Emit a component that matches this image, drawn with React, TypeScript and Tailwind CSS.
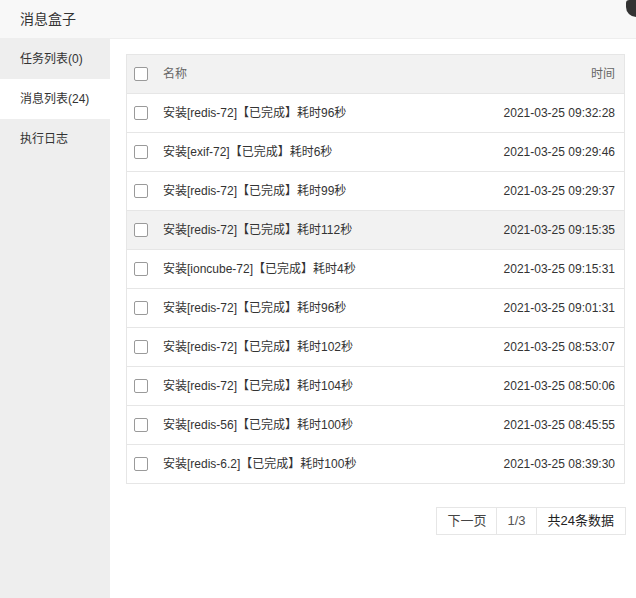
import React from 'react';

type Msg = { name: string; time: string };

const messages: Msg[] = [
  { name: '安装[redis-72]【已完成】耗时96秒', time: '2021-03-25 09:32:28' },
  { name: '安装[exif-72]【已完成】耗时6秒', time: '2021-03-25 09:29:46' },
  { name: '安装[redis-72]【已完成】耗时99秒', time: '2021-03-25 09:29:37' },
  { name: '安装[redis-72]【已完成】耗时112秒', time: '2021-03-25 09:15:35' },
  { name: '安装[ioncube-72]【已完成】耗时4秒', time: '2021-03-25 09:15:31' },
  { name: '安装[redis-72]【已完成】耗时96秒', time: '2021-03-25 09:01:31' },
  { name: '安装[redis-72]【已完成】耗时102秒', time: '2021-03-25 08:53:07' },
  { name: '安装[redis-72]【已完成】耗时104秒', time: '2021-03-25 08:50:06' },
  { name: '安装[redis-56]【已完成】耗时100秒', time: '2021-03-25 08:45:55' },
  { name: '安装[redis-6.2]【已完成】耗时100秒', time: '2021-03-25 08:39:30' },
];

const tabs = ['任务列表(0)', '消息列表(24)', '执行日志'];

const Checkbox: React.FC = () => (
  <span className="inline-block w-[14px] h-[14px] shrink-0 rounded-[2px] border border-[#9a9a9a] bg-white" />
);

const App: React.FC = () => {
  const active = 1;
  const hovered = 3;

  return (
    <div
      className="relative w-[636px] h-[598px] bg-white"
      style={{ fontFamily: '"Liberation Sans", "Noto Sans CJK SC", sans-serif' }}
    >
      <div className="flex flex-col h-full">
        <div className="h-[39px] shrink-0 flex items-center pl-5 bg-[#f8f8f8] border-b border-[#eeeeee] text-[14px] text-[#333]">
          消息盒子
        </div>

        <div className="flex flex-1 min-h-0">
          <div className="w-[110px] shrink-0 bg-[#eeeeee] flex flex-col">
            {tabs.map((t, i) => (
              <div
                key={t}
                className={
                  i === active
                    ? 'h-[40px] flex items-center pl-5 text-[12px] text-[#333] bg-white'
                    : 'h-[40px] flex items-center pl-5 text-[12px] text-[#333]'
                }
              >
                {t}
              </div>
            ))}
          </div>

          <div className="flex-1 pt-[15px] pl-[16px] pr-[11px]">
            <div className="border border-[#e6e6e6]">
              <div className="h-[38px] flex items-center bg-[#f2f2f2] pl-[7px] pr-[9px] text-[12px] text-[#666]">
                <Checkbox />
                <span className="ml-[15px] flex-1">名称</span>
                <span>时间</span>
              </div>
              {messages.map((m, i) => (
                <div
                  key={i}
                  className={
                    i === hovered
                      ? 'h-[39px] flex items-center border-t border-[#e6e6e6] bg-[#f2f2f2] pl-[7px] pr-[9px] text-[12px] text-[#333]'
                      : 'h-[39px] flex items-center border-t border-[#e6e6e6] pl-[7px] pr-[9px] text-[12px] text-[#333]'
                  }
                >
                  <Checkbox />
                  <span className="ml-[15px] flex-1">{m.name}</span>
                  <span>{m.time}</span>
                </div>
              ))}
            </div>

            <div className="flex justify-end mt-[23px] -mr-px">
              <div className="flex h-[28px] border border-[#e6e6e6] text-[13px]">
                <span className="flex items-center px-[10px] text-[#444] border-r border-[#e6e6e6]">下一页</span>
                <span className="flex items-center px-[10px] text-[#555] border-r border-[#e6e6e6]">1/3</span>
                <span className="flex items-center px-[11px] text-[#222]">共24条数据</span>
              </div>
            </div>
          </div>
        </div>
      </div>

      {/* close button, mostly outside the window: only its lower-left edge shows */}
      <div className="absolute top-0 right-0 w-[10px] h-[17px] bg-[#333333] rounded-bl-[12px] rounded-tl-[4px]" />
    </div>
  );
};

export default App;
